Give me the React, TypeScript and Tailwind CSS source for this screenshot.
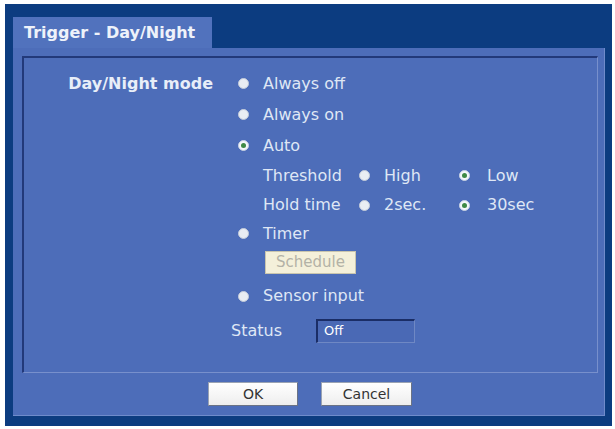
const font = { fontFamily: '"DejaVu Sans", Verdana, sans-serif' };

function Radio({ checked = false }: { checked?: boolean }) {
  if (checked) {
    return (
      <span className="flex h-[11px] w-[11px] shrink-0 items-center justify-center rounded-full border border-[#c9d3e4] bg-[#f4f7fb]">
        <span className="block h-[5px] w-[5px] rounded-full bg-[#3f8a45]" />
      </span>
    );
  }
  return <span className="block h-[11px] w-[11px] shrink-0 rounded-full border border-[#c4ccda] bg-[#e9edf3]" />;
}

function ModeRow({ label, title, checked, height = "h-[31px]" }: { label: string; title?: string; checked?: boolean; height?: string }) {
  return (
    <div className={`flex items-center ${height}`}>
      <div className="w-[189px] text-right text-[16px] font-bold text-[#e8eef8]">{title}</div>
      <div className="ml-[25px]">
        <Radio checked={checked} />
      </div>
      <span className="ml-[14px] text-[16px] text-[#dfe7f5]">{label}</span>
    </div>
  );
}

function SubRow({ name, a, b, height }: { name: string; a: string; b: string; height: string }) {
  return (
    <div className={`flex items-center pl-[239px] text-[16px] text-[#dfe7f5] ${height}`}>
      <span className="w-[96px]">{name}</span>
      <Radio />
      <span className="ml-[14px] w-[75px]">{a}</span>
      <Radio checked />
      <span className="ml-[17px]">{b}</span>
    </div>
  );
}

export default function App() {
  return (
    <div className="h-[429px] w-[615px] bg-white pb-[3px] pl-[5px] pr-[3px] pt-[4px]" style={font}>
      <div className="flex h-full flex-col bg-[#0c3c80] pb-[10px] pl-[8px] pr-[7px] pt-[13px]">
        {/* tab */}
        <div className="flex h-[33px] w-[199px] items-center bg-[#5172bd] pl-[11px] text-[16px] font-bold text-[#eef2fa]">
          Trigger - Day/Night
        </div>

        {/* body */}
        <div className="flex flex-1 flex-col border-b border-r border-[#6f8bcb] bg-[#4d6db9] pb-[9px] pl-[9px] pr-[6px] pt-[8px]">
          <div className="h-[317px] border-b border-l-2 border-r border-t-2 border-b-[#7890cc] border-l-[#22397a] border-r-[#7890cc] border-t-[#22397a] pt-[10px]">
            <ModeRow title="Day/Night mode" label="Always off" />
            <ModeRow label="Always on" />
            <ModeRow label="Auto" checked />
            <SubRow name="Threshold" a="High" b="Low" height="h-[29px]" />
            <SubRow name="Hold time" a="2sec." b="30sec" height="h-[30px]" />
            <ModeRow label="Timer" height="h-[27px]" />
            <div className="flex h-[30px] items-center pl-[241px]">
              <button className="flex h-[23px] w-[91px] items-center justify-center border border-[#c9c5ae] bg-[#f4f0da] text-[15px] text-[#b3b2a6]">
                Schedule
              </button>
            </div>
            <ModeRow label="Sensor input" height="h-[38px]" />
            <div className="flex h-[30px] items-center pl-[207px] pt-[1px]">
              <span className="w-[85px] text-[16px] text-[#dfe7f5]">Status</span>
              <div className="flex h-[24px] w-[99px] items-center border-b border-l-2 border-r border-t-2 border-b-[#6f88c4] border-l-[#1a2d66] border-r-[#6f88c4] border-t-[#1a2d66] bg-[#4a69b5] pl-[6px] text-[13px] text-white">
                Off
              </div>
            </div>
          </div>

          {/* buttons */}
          <div className="mt-[9px] flex justify-center gap-[23px]">
            <button className="flex h-[24px] w-[90px] items-center justify-center border border-[#9aa3b3] border-b-[#6b7385] border-r-[#6b7385] bg-gradient-to-b from-white to-[#eeeeee] text-[14px] text-[#333]">
              OK
            </button>
            <button className="flex h-[24px] w-[91px] items-center justify-center border border-[#9aa3b3] border-b-[#6b7385] border-r-[#6b7385] bg-gradient-to-b from-white to-[#eeeeee] text-[14px] text-[#333]">
              Cancel
            </button>
          </div>
        </div>
      </div>
    </div>
  );
}
